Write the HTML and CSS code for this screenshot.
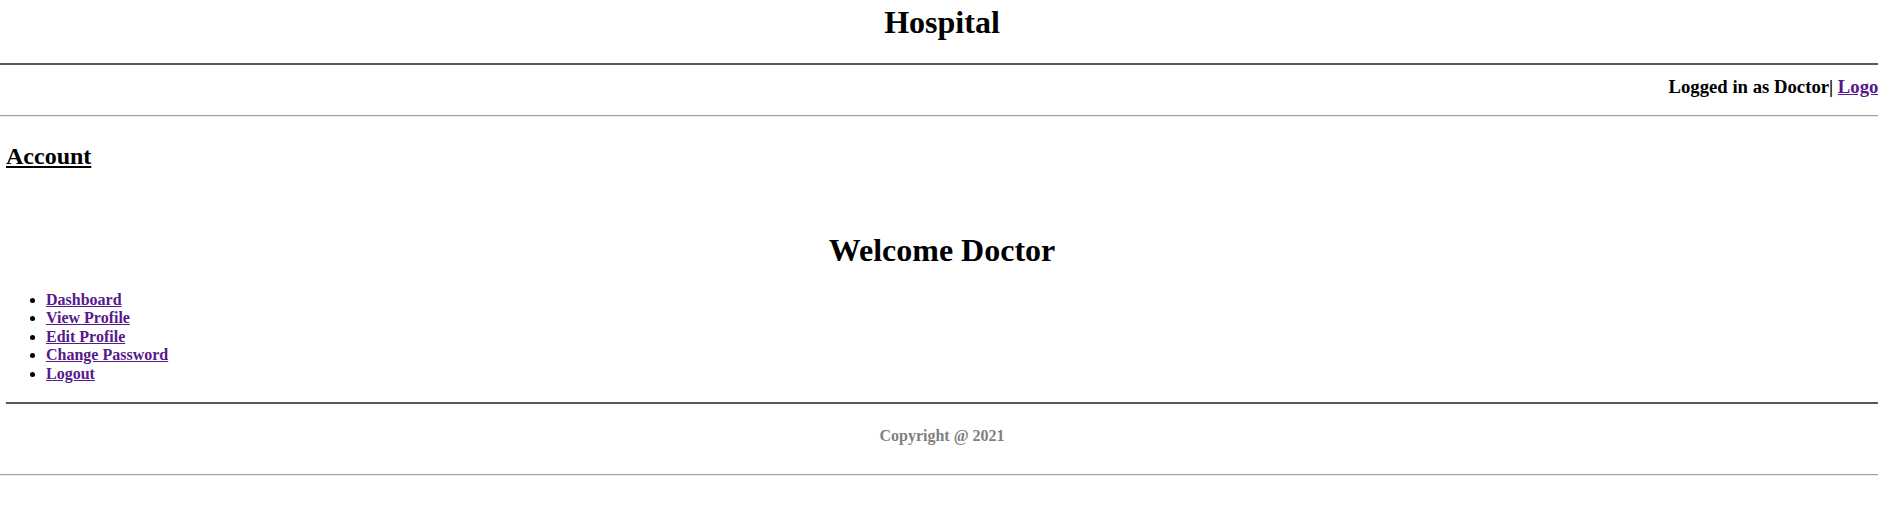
FILE: index.html
```html
<!DOCTYPE html>
<html lang="en">
<head>
<meta charset="utf-8">
<title>Hospital</title>
<link rel="stylesheet" href="styles.css">
</head>
<body>
  <header class="site-header">
    <h1 class="site-title">Hospital</h1>
  </header>
  <div class="rule rule-dark"></div>
  <div class="userbar">
    <span class="userbar-text">Logged in as Doctor| <a href="#" class="link">Logout</a></span>
  </div>
  <div class="rule rule-light"></div>
  <main class="content">
    <h2 class="section-title">Account</h2>
    <h1 class="welcome">Welcome Doctor</h1>
    <ul class="menu">
      <li><a href="#" class="link">Dashboard</a></li>
      <li><a href="#" class="link">View Profile</a></li>
      <li><a href="#" class="link">Edit Profile</a></li>
      <li><a href="#" class="link">Change Password</a></li>
      <li><a href="#" class="link">Logout</a></li>
    </ul>
    <div class="rule rule-dark"></div>
    <p class="copyright">Copyright @ 2021</p>
  </main>
  <div class="rule rule-light"></div>
</body>
</html>
```

FILE: styles.css
```css
html, body {
  margin: 0;
  padding: 0;
  overflow-x: hidden;
  background: #ffffff;
}

body {
  font-family: "Liberation Serif", "Times New Roman", serif;
  color: #000000;
}

.site-header {
  padding: 4px 0 23px 6px;
  text-align: center;
}

.site-title {
  margin: 0;
  font-size: 32px;
  line-height: 36px;
  font-weight: bold;
}

.rule {
  width: 100%;
}

.rule-dark {
  height: 2px;
  background: #585858;
}

.rule-light {
  height: 1px;
  background: #a0a0a0;
  border-bottom: 1px solid #ececec;
}

.userbar {
  display: flex;
  justify-content: flex-end;
  padding: 11px 0 17px;
}

.userbar-text {
  font-size: 18.72px;
  line-height: 22px;
  font-weight: bold;
  white-space: nowrap;
  margin-right: -17px;
}

.link {
  color: #551a8b;
  text-decoration: underline;
}

.content {
  padding: 25px 0 29px 6px;
}

.section-title {
  margin: 0;
  font-size: 24px;
  line-height: 28px;
  font-weight: bold;
  text-decoration: underline;
}

.welcome {
  margin: 62px 0 0;
  font-size: 32px;
  line-height: 36px;
  font-weight: bold;
  text-align: center;
}

.menu {
  margin: 23px 0 19px;
  padding-left: 40px;
  font-size: 16px;
  line-height: 18.4px;
  font-weight: bold;
}

.copyright {
  margin: 23px 0 0;
  font-size: 16px;
  line-height: 18px;
  font-weight: bold;
  color: #808080;
  text-align: center;
}
```
